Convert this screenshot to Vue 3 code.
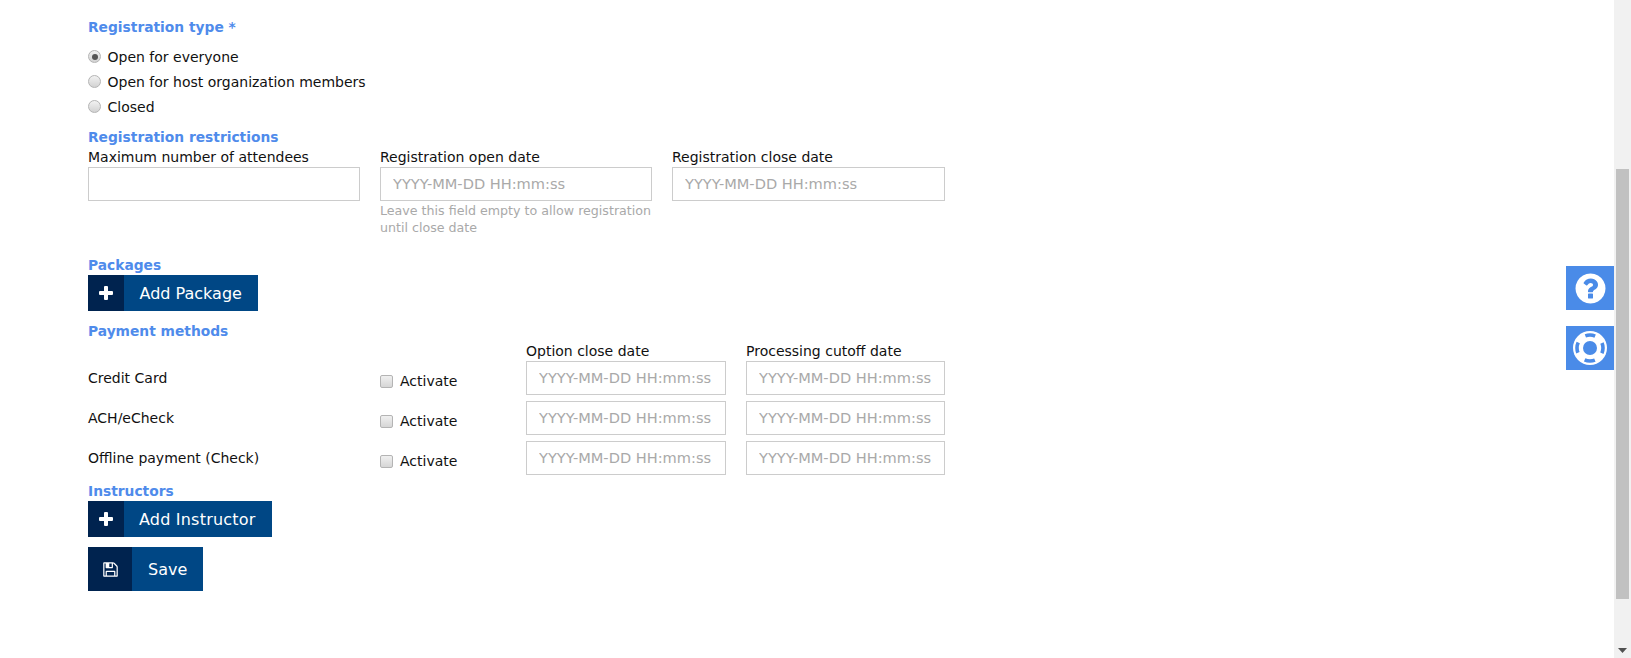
<script setup>
const radios = [
  { label: 'Open for everyone', checked: true },
  { label: 'Open for host organization members', checked: false },
  { label: 'Closed', checked: false }
]
const methods = ['Credit Card', 'ACH/eCheck', 'Offline payment (Check)']
const ph = 'YYYY-MM-DD HH:mm:ss'
const plus = 'M2 6h4V2a1 1 0 0 1 1-1h2a1 1 0 0 1 1 1v4h4a1 1 0 0 1 1 1v2a1 1 0 0 1-1 1h-4v4a1 1 0 0 1-1 1H7a1 1 0 0 1-1-1v-4H2a1 1 0 0 1-1-1V7a1 1 0 0 1 1-1z'
</script>

<template>
  <div class="page">
    <main class="main">
      <h3 class="head first">Registration type *</h3>
      <div class="radios">
        <label v-for="r in radios" :key="r.label" class="radio">
          <input type="radio" name="regtype" :checked="r.checked" />
          <span>{{ r.label }}</span>
        </label>
      </div>

      <h3 class="head restrict">Registration restrictions</h3>
      <div class="three">
        <div class="field">
          <label>Maximum number of attendees</label>
          <input type="text" />
        </div>
        <div class="field">
          <label>Registration open date</label>
          <input type="text" :placeholder="ph" />
          <p class="hint">Leave this field empty to allow registration<br />until close date</p>
        </div>
        <div class="field">
          <label>Registration close date</label>
          <input type="text" :placeholder="ph" />
        </div>
      </div>

      <h3 class="head packages">Packages</h3>
      <button class="btn" type="button">
        <span class="ico"><svg width="16" height="16" viewBox="0 0 16 16"><path :d="plus" fill="#fff" /></svg></span>
        <span class="txt">Add Package</span>
      </button>

      <h3 class="head payment">Payment methods</h3>
      <div class="pay-head">
        <span>Option close date</span>
        <span>Processing cutoff date</span>
      </div>
      <div v-for="m in methods" :key="m" class="pay-row">
        <span class="pay-name">{{ m }}</span>
        <label class="activate"><input type="checkbox" /><span>Activate</span></label>
        <input type="text" :placeholder="ph" />
        <input type="text" :placeholder="ph" />
      </div>

      <h3 class="head instructors">Instructors</h3>
      <button class="btn wide" type="button">
        <span class="ico"><svg width="16" height="16" viewBox="0 0 16 16"><path :d="plus" fill="#fff" /></svg></span>
        <span class="txt">Add Instructor</span>
      </button>
      <button class="btn save" type="button">
        <span class="ico">
          <svg width="17" height="17" viewBox="0 0 1792 1792"><path fill="#fff" d="M512 1536h768v-384h-768v384zm896 0h128v-896q0-14-10-38.500t-20-34.500l-281-281q-10-10-34-20t-39-10v416q0 40-28 68t-68 28h-576q-40 0-68-28t-28-68v-416h-128v1280h128v-416q0-40 28-68t68-28h832q40 0 68 28t28 68v416zm-384-928v-320q0-13-9.500-22.500t-22.500-9.500h-192q-13 0-22.500 9.500t-9.500 22.500v320q0 13 9.500 22.500t22.500 9.500h192q13 0 22.500-9.500t9.500-22.500zm640 32v928q0 40-28 68t-68 28h-1344q-40 0-68-28t-28-68v-1344q0-40 28-68t68-28h928q40 0 88 20t76 48l280 280q28 28 48 76t20 88z" /></svg>
        </span>
        <span class="txt">Save</span>
      </button>
    </main>

    <div class="scrollbar">
      <div class="thumb"></div>
      <svg class="arrow" width="9" height="5" viewBox="0 0 9 5"><path d="M0 0h9L4.500 5z" fill="#505050" /></svg>
    </div>

    <div class="float one">
      <svg width="35" height="35" viewBox="0 0 1792 1792"><path fill="#fff" d="M1024 1376v-192q0-14-9-23t-23-9h-192q-14 0-23 9t-9 23v192q0 14 9 23t23 9h192q14 0 23-9t9-23zm256-672q0-88-55.500-163t-138.500-116-170-41q-243 0-371 213-15 24 8 42l132 100q7 6 19 6 16 0 25-12 53-68 86-92 34-24 86-24 48 0 85.500 26t37.500 59q0 38-20 61t-68 45q-63 28-115.500 86.500t-52.500 125.500v36q0 14 9 23t23 9h192q14 0 23-9t9-23q0-19 21.500-49.500t54.500-49.500q32-18 49-28.500t46-35 44.500-48 28-60.500 12.500-81zm384 192q0 209-103 385.500t-279.500 279.500-385.500 103-385.500-103-279.500-279.500-103-385.500 103-385.500 279.500-279.500 385.500-103 385.500 103 279.500 279.500 103 385.500z" /></svg>
    </div>
    <div class="float two">
      <svg width="36" height="36" viewBox="0 0 36 36">
        <circle cx="18" cy="18" r="17" fill="#fff" />
        <circle cx="18" cy="18" r="7" fill="#4a8be8" />
        <circle cx="18" cy="18" r="13" fill="none" stroke="#4a8be8" stroke-width="3.600" stroke-dasharray="10.500 9.920" stroke-dashoffset="5.250" transform="rotate(-90 18 18)" />
      </svg>
    </div>
  </div>
</template>

<style>
html, body { margin: 0; background: #fff; overflow: hidden; }
</style>

<style scoped>
.page {
  position: relative;
  display: flex;
  height: 658px;
  font-family: "DejaVu Sans", Verdana, sans-serif;
  font-size: 14px;
  color: #111;
  overflow: hidden;
}
.main { flex: 1; padding: 0 0 0 88px; display: flex; flex-direction: column; align-items: flex-start; }
.head { margin: 0; font-size: 13.800px; line-height: 20px; font-weight: 700; color: #4f8beb; }
.first { margin-top: 17px; }
.radios { margin-top: 7px; display: flex; flex-direction: column; }
.radio { display: flex; align-items: center; height: 25px; }
.radio input {
  appearance: none; margin: 0 6.500px 0 0; width: 13px; height: 13px; border-radius: 50%;
  border: 1px solid #b4b4b4; background: linear-gradient(#f2f2f2, #d2d2d2); position: relative; box-sizing: border-box;
}
.radio input:checked::after {
  content: ""; position: absolute; left: 2.500px; top: 2.500px; width: 6px; height: 6px; border-radius: 50%; background: #555;
}
.restrict { margin-top: 8px; }
.three { display: grid; grid-template-columns: 272px 272px 273px; column-gap: 20px; }
.field { display: flex; flex-direction: column; }
.field label { line-height: 20px; }
input[type="text"] {
  box-sizing: border-box; height: 34px; width: 100%; border: 1px solid #ccc; padding: 0 12px; margin: 0;
  font: inherit; background: #fff; outline: none; color: #111;
}
input::placeholder { color: #a9a9a9; opacity: 1; font-size: 14.600px; }
.hint { margin: 1px 0 0; font-size: 12.650px; line-height: 17px; color: #a9a9a9; white-space: nowrap; }
.packages { margin-top: 19px; }
.btn {
  display: inline-flex; align-items: stretch; height: 36px; border: 0; padding: 0; margin: 0;
  font-family: inherit; font-size: 16px; color: #fff; background: #004785; cursor: pointer;
}
.wide { letter-spacing: .2px; }
.ico { width: 36px; background: #00234f; display: flex; align-items: center; justify-content: center; }
.txt { padding: 0 16.500px 0 15.500px; display: flex; align-items: center; }
.wide .txt { padding: 0 16px 0 15px; }
.payment { margin-top: 10px; }
.pay-head { display: flex; margin: 0 0 0 438px; line-height: 20px; }
.pay-head span:first-child { width: 220px; }
.pay-row { display: flex; align-items: center; height: 34px; margin-top: 6px; }
.pay-head + .pay-row { margin-top: 0; }
.pay-row input[type="text"] { width: 200px; margin-right: 20px; flex: none; }
.pay-row input[type="text"]:last-child { width: 199px; margin-right: 0; }
.pay-name { width: 292px; }
.activate { width: 146px; display: flex; align-items: center; padding-top: 6px; box-sizing: border-box; }
.activate input {
  appearance: none; margin: 0 7px 0 0; width: 13px; height: 13px; border-radius: 2px;
  border: 1px solid #b4b4b4; background: linear-gradient(#f0f0f0, #d6d6d6); box-sizing: border-box;
}
.instructors { margin-top: 6px; }
.save { height: 44px; margin-top: 10px; }
.save .ico { width: 44px; }
.save .txt { padding: 0 16px 0 16px; }
.scrollbar { width: 17px; height: 658px; background: #f1f1f1; flex: none; position: relative; }
.thumb { position: absolute; left: 2px; top: 169px; width: 13px; height: 430px; background: #c1c1c1; }
.arrow { position: absolute; left: 4px; bottom: 5px; }
.float { position: absolute; left: 1566px; width: 48px; height: 44px; background: #4a8be8; display: flex; align-items: center; justify-content: center; }
.one { top: 266px; }
.two { top: 326px; }
</style>
